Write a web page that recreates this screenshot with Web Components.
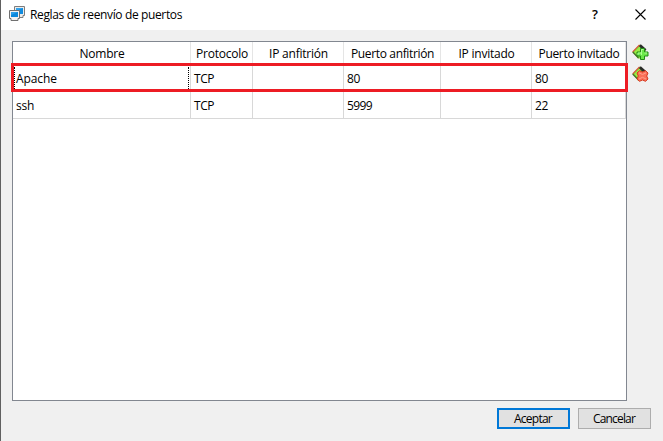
<!DOCTYPE html>
<html lang="es"><head><meta charset="utf-8"><title>Reglas de reenvío de puertos</title>
<style>html,body{margin:0;height:100%;overflow:hidden;font:12px/16px "Open Sans","Noto Sans",sans-serif;color:#000}</style></head>
<body>
<port-dialog></port-dialog>
<script>
function define(name, html, setup) {
  customElements.define(name, class extends HTMLElement {
    connectedCallback() {
      if (this.shadowRoot) return;
      this.attachShadow({mode: 'open'}).innerHTML = html;
      if (setup) setup.call(this, this.shadowRoot);
    }
  });
}
/* A label whose tracking is tightened to a given advance width. */
define('ui-label', `<style>:host{display:inline-block;white-space:nowrap}span{display:inline-block}</style><span><slot></slot></span>`, function (root) {
  const s = root.querySelector('span'), w = +this.getAttribute('w');
  const n = this.textContent.length;
  const natural = s.getBoundingClientRect().width;
  s.style.letterSpacing = ((w - natural) / n) + 'px';
  this.style.width = w + 'px';
});
define('app-icon', `<style>:host{display:block;width:16px;height:16px}svg{display:block}</style>
<svg width="16" height="16" viewBox="0 0 16 16">
<path d="M5.500.5h10v9H14v2H8v-2H5.500z" fill="#ececec" stroke="#7d7d7d"/><path d="M7 2h7v6H7z" fill="#118cdf"/><path d="M7 2h7L7 5z" fill="#35a4ec"/>
<path d="M.5 4.500h10v8H9v2H2v-2H.5z" fill="#f1f1f1" stroke="#707070"/><path d="M2 6h7v5H2z" fill="#0a88dc"/><path d="M2 6h7L2 9z" fill="#2c9fea"/></svg>`);
define('rule-icon', `<style>:host{display:block;width:17px;height:16px}svg{display:block}g{display:none}:host([kind=add]) .add,:host([kind=remove]) .remove{display:block}</style>
<svg width="17" height="16" viewBox="0 0 17 16">
<path d="M8 .5 14 7 8 14.500H6L.5 8z" fill="#84d83c"/><path d="M7.500 .8.7 7.800" stroke="#d84f35" stroke-width="1.200"/><path d="m.7 8 5.800 6" stroke="#456d28" stroke-width="1.200"/><path d="m7.800 1.200 5.700 5.200" stroke="#292b27" stroke-width="2.800"/><path d="M2.500 8 8 2.500V12H6z" fill="#9ded42"/>
<g class="add"><path d="M8.500 4.500h4v3.500h3.500v4h-3.500v3.500h-4V12H5V8h3.500z" fill="#6be84a" stroke="#238b16"/><path d="M9.500 11V5.500H11.500M6 11V9h3.500m3-0H15" stroke="#a9ff8e" fill="none"/></g>
<g class="remove"><path d="m7.500 4.700 3 1.300 3-1.300 2.500 2.300-1.300 3 1.300 3-2.500 2.300-3-1.300-3 1.300L5 13l1.300-3L5 7z" fill="#fa7057" stroke="#d7381f"/><path d="M7 6.800l3.500 1.700L14 6.800M7 13l3.500-1.700L14 13" stroke="#ff9f8a" fill="none"/></g></svg>`);
define('title-bar', `<style>:host{display:flex;height:30px;background:#fff;padding-left:8px;box-sizing:border-box}app-icon{margin-top:6px}ui-label{margin:7px 0 0 5px}.help{margin:5px 0 0 auto;width:9px;font-size:13px;font-weight:600;line-height:18px}.close{margin:9px 17px 0 34px}</style>
<app-icon></app-icon><ui-label w="152"><slot></slot></ui-label><span class="help">?</span>
<svg class="close" width="11" height="11"><path d="m.5.5 10 10m0-10-10 10" stroke="#000" stroke-width="1.100"/></svg>`, function (root) {
  const l = root.querySelector('ui-label'), s = l.shadowRoot.querySelector('span');
  const n = this.textContent.length;
  s.style.letterSpacing = '0px';
  s.style.letterSpacing = ((152 - s.getBoundingClientRect().width) / n) + 'px';
});
define('push-button', `<style>:host{display:flex;justify-content:center;width:73px;height:21px;box-sizing:border-box;background:#e1e1e1;border:1px solid #adadad;padding:2px 1px 0 0}:host([default]){border:2px solid #0078d7;padding:1px 1px 0 0}</style><slot></slot>`);
define('table-cell', `<style>:host{display:block;box-sizing:border-box;border-right:1px solid #d8d8d8;border-bottom:1px solid #d8d8d8;padding:6px 0 0 3px;position:relative}
:host([head]){text-align:center;padding:4px 0 0 1px;border-bottom-color:#e5e5e5;border-right-color:#e5e5e5}
:host([focus])::after{content:"";position:absolute;top:2px;bottom:0;left:1px;right:1px;border:dotted #000;border-width:0 1px}</style><slot></slot>`);
define('rule-table', `<style>:host{display:block;box-sizing:border-box;width:615px;height:360px;border:1px solid #828790;background:#fff;position:relative}
.grid{display:grid;grid-template-columns:178px 62px 91px 97px 91px 94px;grid-template-rows:23px 27px 27px}
.mark{position:absolute;left:-2px;top:21px;width:617px;height:29px;box-sizing:border-box;border:3px solid #ed1c24}</style><div class="grid"></div><div class="mark"></div>`, function (root) {
  const grid = root.querySelector('.grid');
  const rows = [
    [['Nombre',45],['Protocolo',52],['IP anfitrión',59],['Puerto anfitrión',83],['IP invitado',56],['Puerto invitado',81]],
    [['Apache',41],['TCP',20],null,['80',13],null,['80',13]],
    [['ssh',18],['TCP',20],null,['5999',25],null,['22',13]]
  ];
  grid.innerHTML = rows.map((r, i) => r.map((c, j) =>
    `<table-cell${i ? '' : ' head'}${i === 1 && j === 0 ? ' focus' : ''}>${c ? `<ui-label w="${c[1]}">${c[0]}</ui-label>` : ''}</table-cell>`).join('')).join('');
});
define('port-dialog', `<style>:host{display:flex;flex-direction:column;box-sizing:border-box;width:663px;height:441px;background:#f0f0f0;border-left:1px solid #606060}
.content{display:flex;padding:11px 0 0 11px;gap:5px}.tools{display:flex;flex-direction:column;gap:6px;padding-top:3px}.actions{display:flex;justify-content:flex-end;gap:8px;padding:7px 12px 0 0}</style>
<title-bar>Reglas de reenvío de puertos</title-bar>
<div class="content"><rule-table></rule-table><div class="tools"><rule-icon kind="add"></rule-icon><rule-icon kind="remove"></rule-icon></div></div>
<div class="actions"><push-button default><ui-label w="38">Aceptar</ui-label></push-button><push-button><ui-label w="42">Cancelar</ui-label></push-button></div>`);
</script>
</body></html>
